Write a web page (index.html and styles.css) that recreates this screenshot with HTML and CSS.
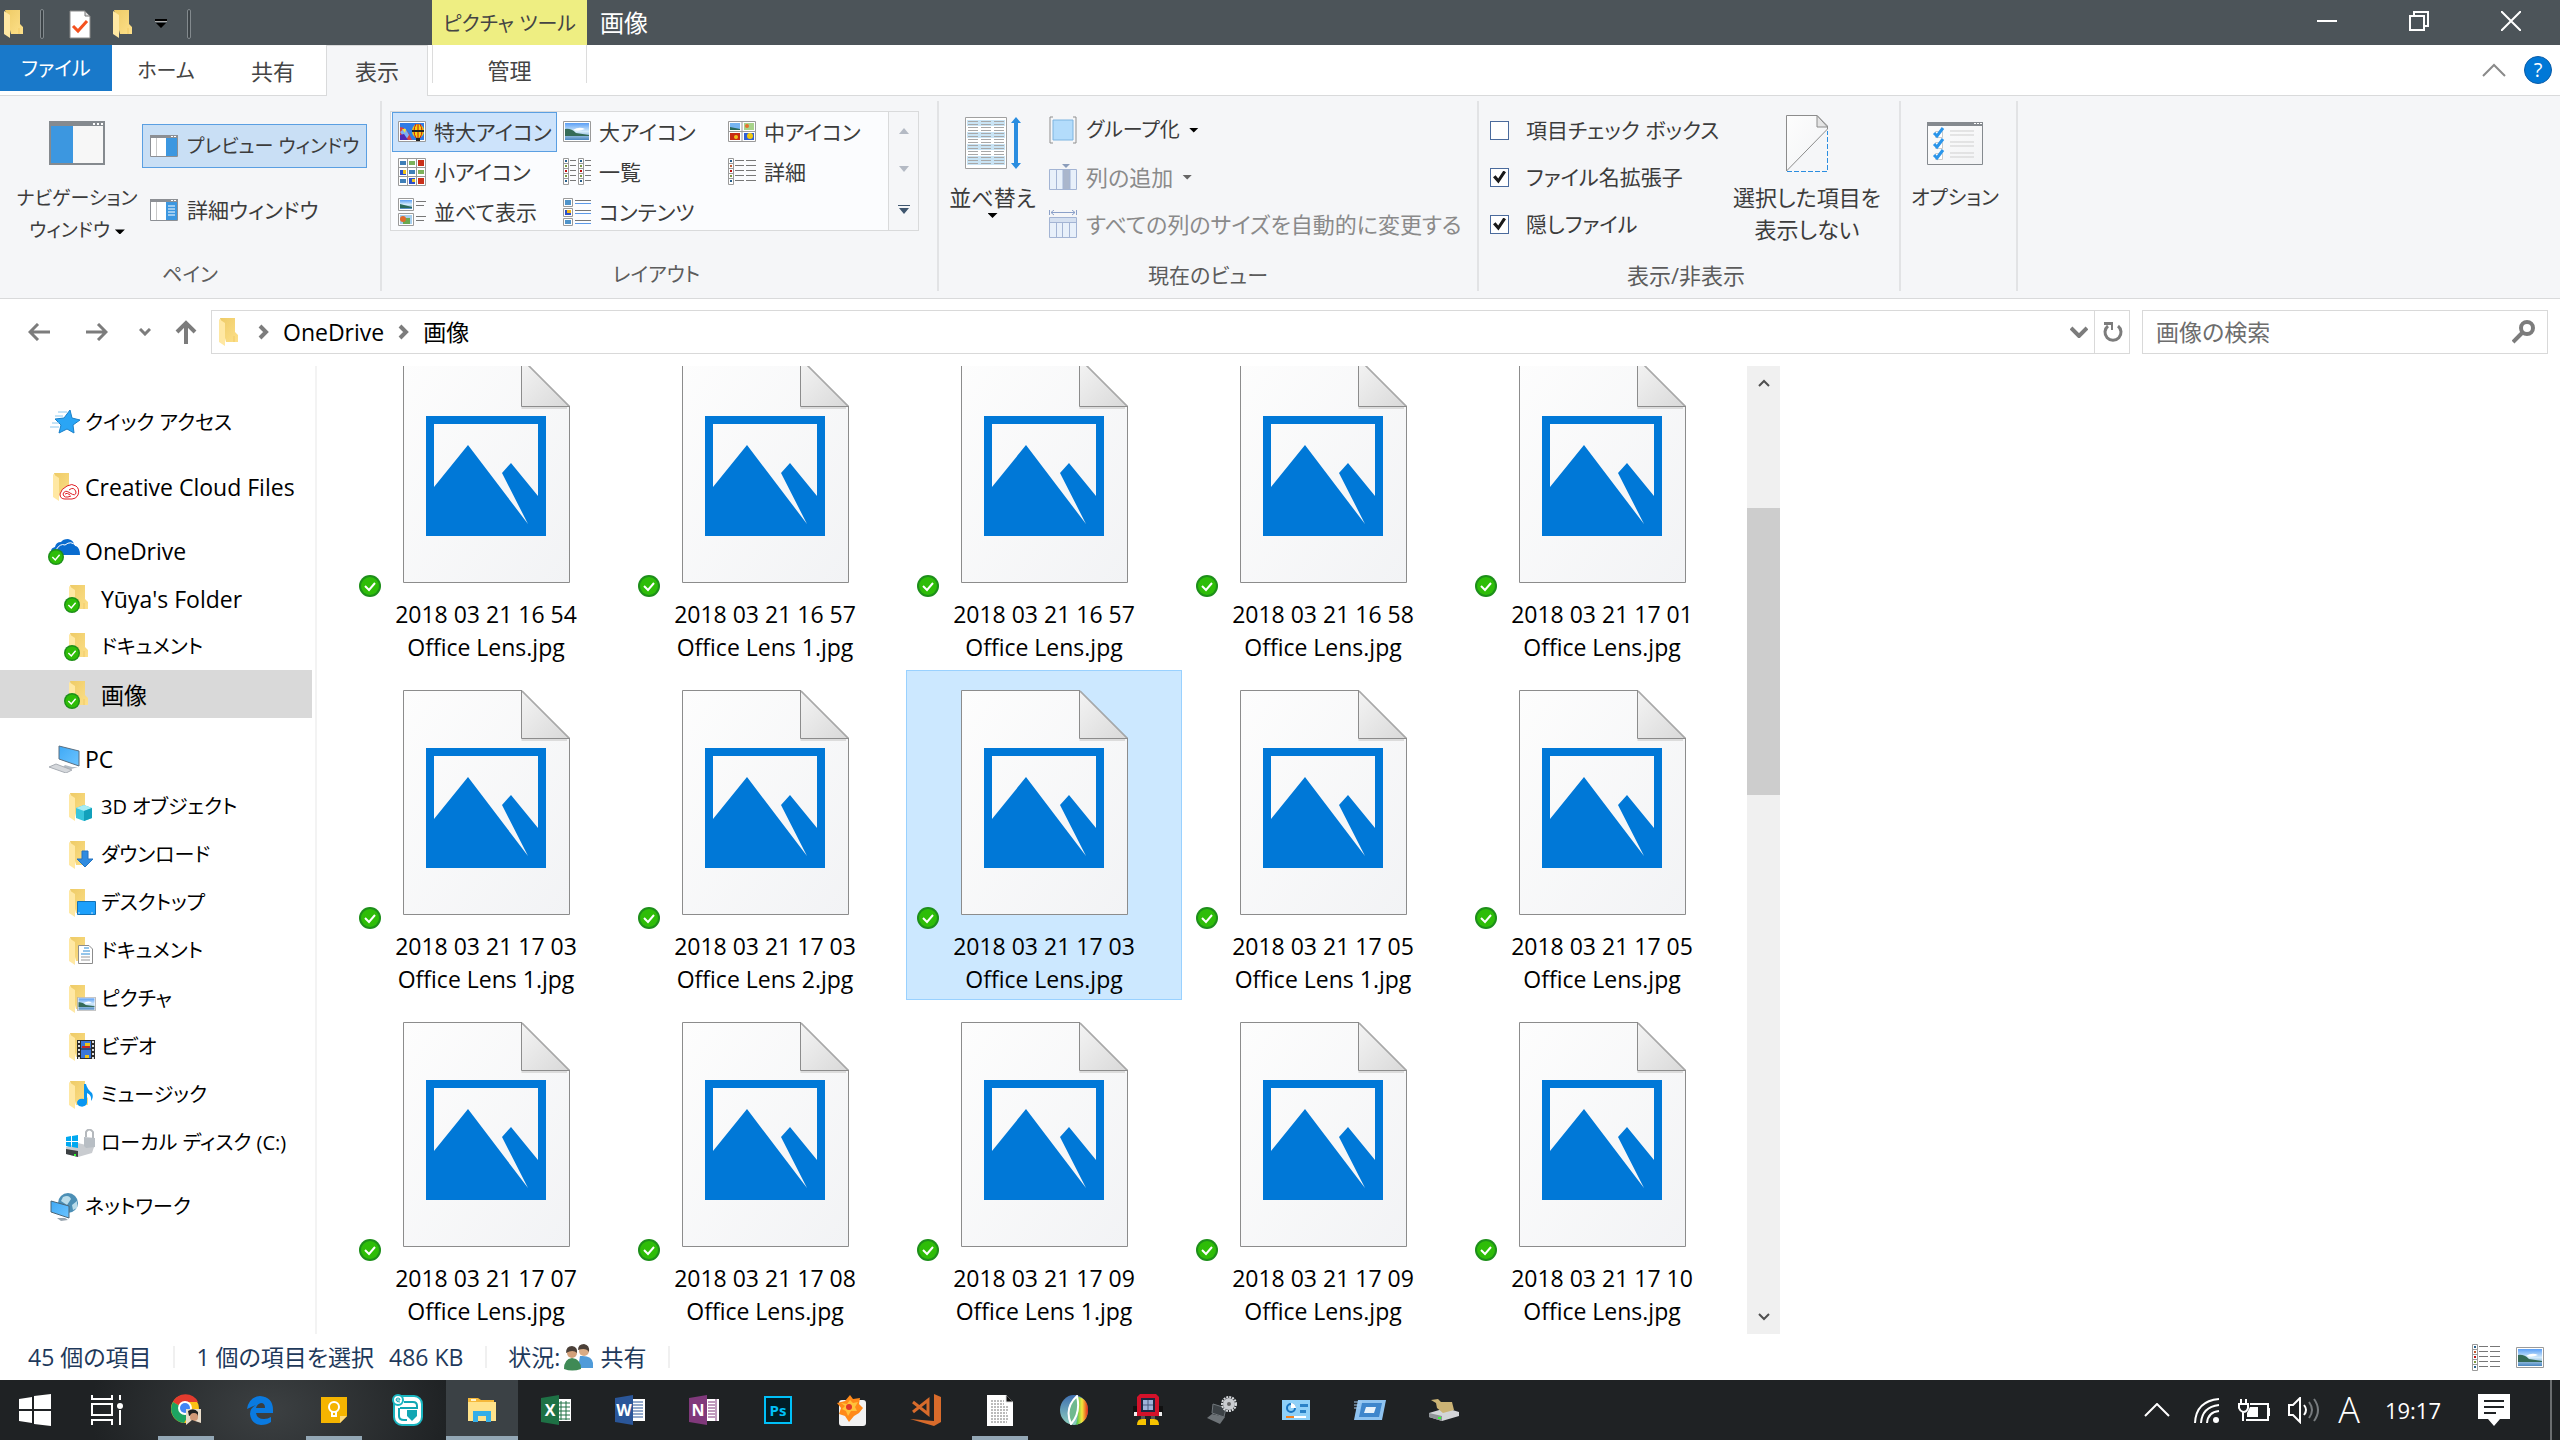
FILE: index.html
```html
<!DOCTYPE html>
<html lang="ja">
<head>
<meta charset="utf-8">
<title>画像</title>
<link rel="stylesheet" href="styles.css">
</head>
<body>
<svg class="defs" aria-hidden="true">
  <defs>
    <linearGradient id="gFolder" x1="0" y1="0" x2="1" y2="1"><stop offset="0" stop-color="#eecb66"/><stop offset="1" stop-color="#fde08a"/></linearGradient>
    <linearGradient id="gPaper" x1="0" y1="0" x2="1" y2="1"><stop offset="0" stop-color="#fdfdfd"/><stop offset="1" stop-color="#f2f3f5"/></linearGradient>
    <linearGradient id="gFold" x1="0" y1="0" x2="1" y2="1"><stop offset="0" stop-color="#f4f4f4"/><stop offset="1" stop-color="#d9d9d9"/></linearGradient>
    <linearGradient id="gSky" x1="0" y1="0" x2="0" y2="1"><stop offset="0" stop-color="#5a9ef5"/><stop offset=".5" stop-color="#d5ecfb"/><stop offset="1" stop-color="#4a86c0"/></linearGradient>
    <linearGradient id="gScreen" x1="0" y1="0" x2="1" y2="1"><stop offset="0" stop-color="#3fa9f5"/><stop offset="1" stop-color="#6cc4ff"/></linearGradient>
    <linearGradient id="gRainbow" x1="0" y1="0" x2="1" y2="0"><stop offset="0" stop-color="#3bbf52"/><stop offset=".5" stop-color="#f5e63b"/><stop offset="1" stop-color="#e2231a"/></linearGradient>
    <linearGradient id="gLeaf" x1="0" y1="0" x2="0" y2="1"><stop offset="0" stop-color="#3f6fb0"/><stop offset="1" stop-color="#8ed0c0"/></linearGradient>
    <symbol id="folder" viewBox="0 0 20 28">
      <path d="M1 0H16V14L19 17V24H7Z" fill="url(#gFolder)"/>
      <path d="M0 1L6 5V28L0 24Z" fill="#ffe8a3"/>
      <path d="M14 24V18H16V24Z" fill="#f3cd6b" opacity=".6"/>
    </symbol>
    <symbol id="ok" viewBox="0 0 22 22">
      <circle cx="11" cy="11" r="11" fill="#1d8f1a"/><circle cx="11" cy="11" r="9" fill="#2ebd08"/>
      <path d="M6 11L10 15L16 8" fill="none" stroke="#fff" stroke-width="2"/>
    </symbol>
    <symbol id="file" viewBox="0 0 167 225">
      <path d="M.5 .5H119L166.5 48V224.500H.5Z" fill="url(#gPaper)" stroke="#8c8c8c"/>
      <path d="M118.500 50H164" stroke="#dcdcdc" stroke-width="2"/>
      <path d="M118.500 1V48.500H166Z" fill="url(#gFold)" stroke="#8c8c8c"/>
      <path fill="#0078d7" fill-rule="evenodd" d="M23 58H143V178H23ZM31 66V129L65 87L125 166L99 115L108 105L135 138V66Z"/>
    </symbol>
    <symbol id="photo" viewBox="0 0 28 21">
      <path d="M.5 .5H27.500V20.500H.5Z" fill="#fff" stroke="#9a9a9a"/>
      <path d="M2 2H26V19H2Z" fill="url(#gSky)"/><path d="M10 9Q16 5 22 8Q16 11 10 9Z" fill="#fff"/>
      <path d="M2 8Q8 7 13 12L26 14V15H2Z" fill="#356b57"/>
    </symbol>
    <symbol id="balloon" viewBox="0 0 28 21">
      <path d="M.5 .5H27.500V20.500H.5Z" fill="#fff" stroke="#9a9a9a"/>
      <path d="M2 2H26V19H2Z" fill="#2f7be6"/>
      <path d="M2 6Q9 6 14 19H2Z" fill="#d8433f"/><path d="M2 11L7 7L11 14L8 19Z" fill="#7bb0f5"/><path d="M2 14L6 13L10 19H2Z" fill="#4e2bb5"/><path d="M4 8L8 8L7 12Z" fill="#f5e23b"/>
      <ellipse cx="20" cy="10" rx="6" ry="7" fill="#f4d312"/><path d="M18 3Q14 10 18 17M22 3Q26 10 22 17M20 3V17" stroke="#cc1111" fill="none"/><path d="M14 9H26V11H14Z" fill="#222"/><path d="M18 17H22V20H18Z" fill="#222"/>
    </symbol>
    <symbol id="grid4" viewBox="0 0 28 21">
      <path d="M.5 .5H27.500V20.500H.5Z" fill="#fff" stroke="#9a9a9a"/><path d="M14 0V21M0 10.500H28" stroke="#9a9a9a"/>
      <path d="M2 2H12V9H2Z" fill="#76b5f2"/><path d="M2 6L12 8V9H2Z" fill="#2b6a5b"/><path d="M16 2H26V9H16Z" fill="#a7d38b"/><circle cx="19" cy="5" r="2" fill="#e6702c"/><path d="M2 12H12V19H2Z" fill="#c72a14"/><circle cx="8" cy="16" r="2" fill="#f0c01c"/><path d="M16 12H26V19H16Z" fill="#2f5fd6"/><circle cx="22" cy="15" r="3" fill="#f2c80f"/>
    </symbol>
    <symbol id="grid9" viewBox="0 0 28 28">
      <path d="M.5 .5H27.500V27.500H.5Z" fill="#fff" stroke="#9a9a9a"/><path d="M9.500 0V28M18.500 0V28M0 9.500H28M0 18.500H28" stroke="#9a9a9a"/>
      <path d="M2 3H8V7H2ZM11 12H17V16H11ZM2 21H8V25H2Z" fill="#3f7fb8"/><path d="M11 3H17V7H11ZM20 12H26V16H20Z" fill="#7cb25a"/><path d="M20 2H26V8H20ZM20 20H26V26H20Z" fill="#c9301a"/><path d="M2 12H8V17H2ZM11 20H17V26H11Z" fill="#2b4fc9"/><path d="M5 12H8V16H5ZM14 21H17V24H14Z" fill="#f0c41a"/>
    </symbol>
    <symbol id="list" viewBox="0 0 28 27">
      <path d="M.5 .5H5.500V26.500H.5ZM15.500 .5H20.500V26.500H15.500Z" fill="#fff" stroke="#9a9a9a"/>
      <path d="M0 5.500H6M0 10.500H6M0 15.500H6M0 20.500H6M15 5.500H21M15 10.500H21M15 15.500H21M15 20.500H21" stroke="#9a9a9a"/>
      <path d="M7 2.500H13M7 7.500H13M7 12.500H13M7 17.500H13M7 22.500H13M22 2.500H28M22 7.500H28M22 12.500H28M22 17.500H28M22 22.500H28" stroke="#777"/>
      <path d="M2 2H4V4H2ZM2 22H4V24H2ZM17 2H19V4H17ZM17 22H19V24H17Z" fill="#27618c"/><path d="M2 12H4V14H2ZM17 12H19V14H17Z" fill="#c01010"/><path d="M2 17H4V19H2ZM17 17H19V19H17ZM2 7H4V9H2ZM17 7H19V9H17Z" fill="#7a9a40"/>
    </symbol>
    <symbol id="details" viewBox="0 0 28 27">
      <path d="M.5 .5H5.500V26.500H.5Z" fill="#fff" stroke="#9a9a9a"/><path d="M0 5.500H6M0 10.500H6M0 15.500H6M0 20.500H6" stroke="#9a9a9a"/>
      <path d="M7 2.500H16M7 7.500H16M7 12.500H16M7 17.500H16M7 22.500H16M18 2.500H28M18 7.500H28M18 12.500H28M18 17.500H28M18 22.500H28" stroke="#777"/>
      <path d="M2 2H4V4H2ZM2 22H4V24H2Z" fill="#27618c"/><path d="M2 12H4V14H2Z" fill="#c01010"/><path d="M2 17H4V19H2Z" fill="#7a9a40"/><path d="M2 7H4V9H2Z" fill="#c05a30"/>
    </symbol>
    <symbol id="tiles" viewBox="0 0 28 28">
      <path d="M.5 .5H15.500V12.500H.5ZM.5 15.500H15.500V27.500H.5Z" fill="#fff" stroke="#9a9a9a"/>
      <path d="M2 2H14V11H2Z" fill="url(#gSky)"/><path d="M2 6L14 9V10H2Z" fill="#2b6a5b"/><path d="M2 17H14V26H2Z" fill="#a7cfee"/><path d="M5 20H12V26H5Z" fill="#6aa84f"/><circle cx="5" cy="21" r="3" fill="#e06a2b"/>
      <path d="M18 3.500H28M18 7.500H26M18 18.500H28M18 22.500H26" stroke="#777"/>
    </symbol>
    <symbol id="content" viewBox="0 0 28 28">
      <path d="M.5 .5H9.500V8.500H.5ZM.5 10.500H9.500V18.500H.5ZM.5 20.500H9.500V27.500H.5Z" fill="#fff" stroke="#9a9a9a"/>
      <path d="M2 2H8V7H2ZM2 22H8V26H2Z" fill="#4f93c9"/><path d="M2 12H8V17H2Z" fill="#2b4fc9"/><path d="M4 12H8V15H4Z" fill="#f0b41a"/>
      <path d="M12 2.500H28M12 12.500H28M12 22.500H28" stroke="#777"/><path d="M12 5.500H28M12 15.500H28M12 25.500H28" stroke="#5c9ae8"/>
    </symbol>
    <symbol id="preview" viewBox="0 0 28 22">
      <path d="M.5 .5H27.500V21.500H.5Z" fill="#fff" stroke="#8c8f94"/><path d="M0 0H28V3H0Z" fill="#8c8f94"/><path d="M6.500 3V21" stroke="#c8c8c8"/><path d="M16 3H27V21H16Z" fill="#3c97e0"/><path d="M21 1H23V2H21ZM24 1H26V2H24Z" fill="#fff"/>
    </symbol>
    <symbol id="chev" viewBox="0 0 12 16"><path d="M2 2L8 8L2 14" fill="none" stroke="#7c7c7c" stroke-width="4"/></symbol>
  </defs>
</svg>

<div class="window">
  <header class="titlebar">
    <div class="qat">
      <svg width="20" height="28"><use href="#folder"/></svg>
      <span class="vbar"></span>
      <button class="bare" aria-label="プロパティ"><svg width="22" height="29" viewBox="0 0 22 29"><path d="M1 1H16L21 6V28H1Z" fill="#fff" stroke="#8a8a8a"/><path d="M16 1V6H21Z" fill="#ddd" stroke="#777"/><path d="M4 16L9 21L18 11" fill="none" stroke="#f4511e" stroke-width="3"/></svg></button>
      <button class="bare" aria-label="新しいフォルダー"><svg width="20" height="28"><use href="#folder"/></svg></button>
      <button class="bare more" aria-label="カスタマイズ"><svg width="12" height="10" viewBox="0 0 12 10"><path d="M0 0H12V2H0ZM1 4H11L6 9Z" fill="#000"/><path d="M0 2H12V3H0Z" fill="#aaa"/></svg></button>
      <span class="vbar"></span>
    </div>
    <div class="context kana">ピクチャ ツール</div>
    <h1 class="title">画像</h1>
    <div class="winctl">
      <button aria-label="最小化"><svg width="20" height="20" viewBox="0 0 20 20"><path d="M0 10H20" stroke="#fff" stroke-width="2"/></svg></button>
      <button aria-label="元に戻す"><svg width="20" height="20" viewBox="0 0 20 20"><path d="M1 5H15V19H1ZM5 5V1H19V15H15" fill="none" stroke="#fff" stroke-width="2"/></svg></button>
      <button aria-label="閉じる"><svg width="20" height="20" viewBox="0 0 20 20"><path d="M0 0L20 20M20 0L0 20" stroke="#fff" stroke-width="2"/></svg></button>
    </div>
  </header>

  <nav class="tabs">
    <button class="tab file kana">ファイル</button>
    <button class="tab home kana">ホーム</button>
    <button class="tab share">共有</button>
    <button class="tab view">表示</button>
    <button class="tab manage">管理</button>
    <span class="grow"></span>
    <button class="bare" aria-label="リボンの最小化"><svg width="24" height="14" viewBox="0 0 24 14"><path d="M1 13L12 2L23 13" fill="none" stroke="#8a8a8a" stroke-width="2"/></svg></button>
    <button class="help" aria-label="ヘルプ">?</button>
  </nav>

  <section class="ribbon">
    <div class="group g-pane">
      <div class="gbody">
        <button class="big navpane"><svg width="56" height="44" viewBox="0 0 56 44"><path d="M1 1H55V43H1Z" fill="#f7f7f7" stroke="#858a8f" stroke-width="2"/><path d="M0 0H56V5H0Z" fill="#858a8f"/><path d="M2 5H24V42H2Z" fill="#3c97e0"/><path d="M44 2H46V4H44ZM48 2H50V4H48ZM52 2H54V4H52Z" fill="#fff"/></svg><span>ナビゲーション<br>ウィンドウ <i class="tri"></i></span></button>
        <div class="stack">
          <button class="small dense on"><svg width="28" height="22"><use href="#preview"/></svg>プレビュー ウィンドウ</button>
          <button class="small mixed"><svg width="28" height="22" viewBox="0 0 28 22"><use href="#preview" width="28" height="22"/><path d="M18 7H25M18 10H25M18 13H25M18 16H25" stroke="#fff"/></svg>詳細ウィンドウ</button>
        </div>
      </div>
      <div class="glabel kana">ペイン</div>
    </div>

    <div class="group g-layout">
      <div class="gbody">
        <div class="gallery">
          <div class="opts">
            <button class="opt on"><svg width="28" height="21"><use href="#balloon"/></svg>特大アイコン</button>
            <button class="opt"><svg width="28" height="21"><use href="#photo"/></svg>大アイコン</button>
            <button class="opt"><svg width="28" height="21"><use href="#grid4"/></svg>中アイコン</button>
            <button class="opt"><svg width="28" height="28"><use href="#grid9"/></svg>小アイコン</button>
            <button class="opt"><svg width="28" height="27"><use href="#list"/></svg>一覧</button>
            <button class="opt"><svg width="28" height="27"><use href="#details"/></svg>詳細</button>
            <button class="opt"><svg width="28" height="28"><use href="#tiles"/></svg>並べて表示</button>
            <button class="opt"><svg width="28" height="28"><use href="#content"/></svg>コンテンツ</button>
          </div>
          <div class="spin">
            <button aria-label="上へ"><svg width="10" height="6" viewBox="0 0 10 6"><path d="M0 6L5 0L10 6Z" fill="#b4bac4"/></svg></button>
            <button aria-label="下へ"><svg width="10" height="6" viewBox="0 0 10 6"><path d="M0 0L5 6L10 0Z" fill="#b4bac4"/></svg></button>
            <button aria-label="その他"><svg width="12" height="9" viewBox="0 0 12 9"><path d="M0 0H12V1H0ZM1 3L6 9L11 3Z" fill="#3f566f"/></svg></button>
          </div>
        </div>
      </div>
      <div class="glabel kana">レイアウト</div>
    </div>

    <div class="group g-current">
      <div class="gbody">
        <button class="big sort"><svg width="56" height="52" viewBox="0 0 56 52"><path d="M.5 .5H41.500V51.500H.5Z" fill="#fff" stroke="#a0a0a0"/><path d="M2 3H40V9H2ZM2 15H40V21H2ZM2 27H40V33H2ZM2 39H40V48H2Z" fill="#c9e4f5"/><path d="M3 4.500H40M3 7.500H40M3 10.500H40M3 13.500H40M3 16.500H40M3 19.500H40M3 22.500H40M3 25.500H40M3 28.500H40M3 31.500H40M3 34.500H40M3 37.500H40M3 40.500H40M3 43.500H40M3 46.500H40" stroke="#a8a8a8" stroke-dasharray="10 3"/><path d="M51 0L56 6H53V46H56L51 52L46 46H49V6H46Z" fill="#2a8de0"/></svg><span>並べ替え</span><i class="tri"></i></button>
        <div class="stack three">
          <button class="small kana"><svg width="28" height="28" viewBox="0 0 28 28"><path d="M4 1H1V27H4M24 1H27V27H24" fill="none" stroke="#8f8f8f"/><path d="M4 4H24V24H4Z" fill="#b3dcfb" stroke="#7db4e0"/></svg>グループ化 <i class="tri"></i></button>
          <button class="small dim" disabled><svg width="28" height="26" viewBox="0 0 28 26"><path d="M13 0H21L17 4Z" fill="#8b9dbb"/><path d="M.5 5.500H27.500V25.500H.5Z" fill="#e8f0fa" stroke="#a3b4d4"/><path d="M14 6H21V25H14Z" fill="#aab6cc"/><path d="M7.500 6V25M14 6V25M21 6V25" stroke="#a3b4d4"/></svg>列の追加 <i class="tri"></i></button>
          <button class="small dim" disabled><svg width="28" height="28" viewBox="0 0 28 28"><path d="M.5 0V5M27.500 0V5M2 2.500H26M5 0L2 2.500L5 5M23 0L26 2.500L23 5" fill="none" stroke="#8ba0c8"/><path d="M.5 7.500H27.500V27.500H.5Z" fill="#e8f0fa" stroke="#a3b4d4"/><path d="M1 8H27V12H1Z" fill="#d5e0f0"/><path d="M0 12.500H28M7.500 12V28M13.500 12V28M20.500 12V28" stroke="#a3b4d4"/></svg>すべての列のサイズを自動的に変更する</button>
        </div>
      </div>
      <div class="glabel mixed">現在のビュー</div>
    </div>

    <div class="group g-show">
      <div class="gbody">
        <div class="checks">
          <label><input type="checkbox">項目チェック ボックス</label>
          <label><input type="checkbox" checked>ファイル名拡張子</label>
          <label><input type="checkbox" checked>隠しファイル</label>
        </div>
        <button class="big hide"><svg width="42" height="57" viewBox="0 0 42 57"><path d="M.5 .5H31L41.500 11V14L.5 56Z" fill="url(#gPaper)" stroke="#8c8c8c"/><path d="M31 .5V12H41.500Z" fill="#e4e4e4" stroke="#8c8c8c"/><path d="M1 56.500H41.500V16" fill="none" stroke="#2a8de0" stroke-dasharray="5 2"/></svg><span>選択した項目を<br>表示しない</span></button>
      </div>
      <div class="glabel">表示/非表示</div>
    </div>

    <div class="group g-option">
      <div class="gbody">
        <button class="big opt-btn kana"><svg width="56" height="43" viewBox="0 0 56 43"><path d="M.5 .5H55.500V42.500H.5Z" fill="url(#gPaper)" stroke="#858a8f"/><path d="M0 0H56V4H0Z" fill="#858a8f"/><path d="M47 1H49V2H47ZM50 1H52V2H50ZM53 1H55V2H53Z" fill="#fff"/><path d="M8.500 9.500H15.500V15.500H8.500ZM8.500 20.500H15.500V26.500H8.500ZM8.500 31.500H15.500V37.500H8.500Z" fill="#fff" stroke="#ccc"/><path d="M7 11L10 14L16 6M7 22L10 25L16 17M7 33L10 36L16 28" fill="none" stroke="#2a95ea" stroke-width="3"/><path d="M23 9H47M23 13H47M23 20H47M23 24H47M23 31H47M23 35H47" stroke="#cfcfcf"/></svg><span>オプション</span></button>
      </div>
    </div>
  </section>

  <div class="navrow">
    <button class="bare" aria-label="戻る"><svg width="22" height="18" viewBox="0 0 22 18"><path d="M22 9H3M10 1L2 9L10 17" fill="none" stroke="#7c7c7c" stroke-width="3"/></svg></button>
    <button class="bare fwd" aria-label="進む"><svg width="22" height="18" viewBox="0 0 22 18"><path d="M0 9H19M12 1L20 9L12 17" fill="none" stroke="#7c7c7c" stroke-width="3"/></svg></button>
    <button class="bare hist" aria-label="最近表示した場所"><svg width="12" height="8" viewBox="0 0 12 8"><path d="M1 1L6 6L11 1" fill="none" stroke="#7c7c7c" stroke-width="3"/></svg></button>
    <button class="bare up" aria-label="上へ"><svg width="22" height="24" viewBox="0 0 22 24"><path d="M11 24V3M2 12L11 3L20 12" fill="none" stroke="#7c7c7c" stroke-width="4"/></svg></button>
    <div class="address">
      <svg width="20" height="28"><use href="#folder"/></svg>
      <svg class="sep" width="12" height="16"><use href="#chev"/></svg>
      <a href="#">OneDrive</a>
      <svg class="sep" width="12" height="16"><use href="#chev"/></svg>
      <a href="#">画像</a>
      <span class="grow"></span>
      <button class="bare drop" aria-label="以前の場所"><svg width="18" height="12" viewBox="0 0 18 12"><path d="M1 2L9 10L17 2" fill="none" stroke="#7c7c7c" stroke-width="4"/></svg></button>
      <button class="bare reload" aria-label="更新"><svg width="20" height="22" viewBox="0 0 20 22"><path d="M15 5A8 8 0 1 1 5 5" fill="none" stroke="#7c7c7c" stroke-width="3"/><path d="M1 1H10V9H8V4H1Z" fill="#7c7c7c"/></svg></button>
    </div>
    <div class="search">
      <input type="search" aria-label="画像の検索" placeholder="画像の検索">
      <svg width="24" height="24" viewBox="0 0 24 24"><circle cx="15" cy="8" r="6" fill="none" stroke="#7c7c7c" stroke-width="4"/><path d="M11 12L1 22" stroke="#7c7c7c" stroke-width="4"/></svg>
    </div>
  </div>

  <main class="main">
    <nav class="tree">
      <a href="#" class="kana"><svg width="32" height="28" viewBox="0 0 32 28"><path d="M22 1L24 9L32 11L25 16L26 24L19 20L11 24L13 16L7 10L16 9Z" fill="#2aa5f5" stroke="#1b80c8"/><path d="M10 3H19M7 7H15M4 14H11M2 18H11" stroke="#8cc8ee"/></svg>クイック アクセス</a>
      <a href="#" class="gap"><svg width="32" height="28" viewBox="0 0 32 28"><use href="#folder" x="5" y="0" width="20" height="28"/><path d="M19 13Q24 10 28 13Q32 16 30 22Q28 26 24 26H17Q12 26 12 21Q13 16 19 13Z" fill="#fff" stroke="#e01f26" stroke-width="1"/><path d="M23 23Q16 26 15 21Q17 16 22 20Q28 24 28 19Q26 13 21 17M17 21Q19 19 22 22" fill="none" stroke="#e01f26" stroke-width="1"/></svg>Creative Cloud Files</a>
      <a href="#" class="gap"><svg width="32" height="28" viewBox="0 0 32 28"><path d="M6 18Q3 18 3 14Q3 11 7 10Q8 5 13 5Q15 2 20 2Q25 3 26 7L28 9Q32 11 32 18H12Z" fill="#0a6ccf"/><path d="M8 13Q12 6 17 8Q23 3 28 9" fill="none" stroke="#fff" stroke-width="1"/><use href="#ok" x="0" y="12" width="16" height="16"/></svg>OneDrive</a>
      <a href="#" class="sub"><svg width="32" height="28" viewBox="0 0 32 28"><use href="#folder" x="5" width="20" height="28"/><use href="#ok" x="0" y="12" width="16" height="16"/></svg>Yūya's Folder</a>
      <a href="#" class="sub kana"><svg width="32" height="28" viewBox="0 0 32 28"><use href="#folder" x="5" width="20" height="28"/><use href="#ok" x="0" y="12" width="16" height="16"/></svg>ドキュメント</a>
      <a href="#" class="sub current"><svg width="32" height="28" viewBox="0 0 32 28"><use href="#folder" x="5" width="20" height="28"/><use href="#ok" x="0" y="12" width="16" height="16"/></svg>画像</a>
      <a href="#" class="gap"><svg width="32" height="28" viewBox="0 0 32 28"><path d="M11 1L31 6V21L11 14Z" fill="url(#gScreen)" stroke="#5a6e80"/><path d="M17 20L24 22L30 22L20 25L15 22Z" fill="#b4bcc4"/><path d="M1 22L8 19L24 25L18 28Z" fill="#d5d8dc" stroke="#a8adb4"/></svg>PC</a>
      <a href="#" class="sub kana"><svg width="32" height="28" viewBox="0 0 32 28"><use href="#folder" x="5" width="20" height="28"/><path d="M12 15L20 12L28 15V25L20 28L12 25Z" fill="#38c5dc"/><path d="M12 15L20 18L28 15L20 12Z" fill="#a8ecf5"/><path d="M20 18L28 15V25L20 28Z" fill="#12a0bb"/></svg>3D オブジェクト</a>
      <a href="#" class="sub kana"><svg width="32" height="28" viewBox="0 0 32 28"><use href="#folder" x="5" width="20" height="28"/><path d="M18 10H24V18H29L21 26L13 18H18Z" fill="#2f8be0" stroke="#2473c0"/></svg>ダウンロード</a>
      <a href="#" class="sub kana"><svg width="32" height="28" viewBox="0 0 32 28"><use href="#folder" x="5" width="20" height="28"/><path d="M13.500 12.500H31.500V25.500H13.500Z" fill="#1da0fb" stroke="#1272b8"/><path d="M14 24H31" stroke="#cde" stroke-dasharray="2 11"/></svg>デスクトップ</a>
      <a href="#" class="sub kana"><svg width="32" height="28" viewBox="0 0 32 28"><use href="#folder" x="5" width="20" height="28"/><path d="M14.500 8.500H25L28.500 12V26.500H14.500Z" fill="#fff" stroke="#8c8c8c"/><path d="M20 11H25M19 14H26M17 17H26" stroke="#2b8bd4"/><path d="M17 20H26M17 23H26" stroke="#999"/></svg>ドキュメント</a>
      <a href="#" class="sub kana"><svg width="32" height="28" viewBox="0 0 32 28"><use href="#folder" x="5" width="20" height="28"/><use href="#photo" x="13" y="12" width="19" height="14"/></svg>ピクチャ</a>
      <a href="#" class="sub kana"><svg width="32" height="28" viewBox="0 0 32 28"><use href="#folder" x="5" width="20" height="28"/><path d="M13 7H31V26H13Z" fill="#2a2a2a"/><path d="M17 8H27V25H17Z" fill="#3a76d8"/><path d="M15 8V26M29 8V26" stroke="#ddd" stroke-width="2" stroke-dasharray="2 2"/><path d="M18 13H26V15H18Z" fill="#c62828"/><path d="M21 10H26V13H21ZM21 22H25V25H21Z" fill="#f0c41a"/><path d="M17 16H27" stroke="#222"/></svg>ビデオ</a>
      <a href="#" class="sub kana"><svg width="32" height="28" viewBox="0 0 32 28"><use href="#folder" x="5" width="20" height="28"/><path d="M20 3H22Q23 8 28 12Q30 16 27 20Q28 14 23 12V22A5 4 0 1 1 20 18Z" fill="#0a96f0"/></svg>ミュージック</a>
      <a href="#" class="sub kana"><svg width="32" height="28" viewBox="0 0 32 28"><path d="M2 18L14 14L30 18L28 24L14 28L2 25Z" fill="#c9ccd0"/><path d="M2 20L14 22V28L2 25Z" fill="#3c4043"/><path d="M2 8L7 7V12H2ZM8 7L14 6V12H8ZM2 13H7V18L2 17ZM8 13H14V19L8 18Z" fill="#00a8f0"/><path d="M10 25H12V27H10Z" fill="#3f3"/><path d="M22 8V3Q25 -2 29 3V9" fill="none" stroke="#b4b8bc" stroke-width="2"/><path d="M20 8L31 9V18L22 19L20 17Z" fill="#b8bec4"/></svg>ローカル ディスク (C:)</a>
      <a href="#" class="gap kana"><svg width="32" height="28" viewBox="0 0 32 28"><circle cx="20" cy="10" r="10" fill="#4c8fb5"/><path d="M15 4Q21 1 23 6L19 12L13 8ZM24 12L29 8V15L25 17Z" fill="#b9dcea"/><path d="M3 8L21 13V25L3 19Z" fill="url(#gScreen)" stroke="#4a6678"/><path d="M9 25L17 25L20 27L13 28Z" fill="#9aa6b0"/></svg>ネットワーク</a>
    </nav>

    <section class="files">
      <div class="grid">
        <button class="item"><svg class="page" width="167" height="225"><use href="#file"/></svg><svg class="badge" width="22" height="22"><use href="#ok"/></svg><span>2018 03 21 16 54<br>Office Lens.jpg</span></button>
        <button class="item"><svg class="page" width="167" height="225"><use href="#file"/></svg><svg class="badge" width="22" height="22"><use href="#ok"/></svg><span>2018 03 21 16 57<br>Office Lens 1.jpg</span></button>
        <button class="item"><svg class="page" width="167" height="225"><use href="#file"/></svg><svg class="badge" width="22" height="22"><use href="#ok"/></svg><span>2018 03 21 16 57<br>Office Lens.jpg</span></button>
        <button class="item"><svg class="page" width="167" height="225"><use href="#file"/></svg><svg class="badge" width="22" height="22"><use href="#ok"/></svg><span>2018 03 21 16 58<br>Office Lens.jpg</span></button>
        <button class="item"><svg class="page" width="167" height="225"><use href="#file"/></svg><svg class="badge" width="22" height="22"><use href="#ok"/></svg><span>2018 03 21 17 01<br>Office Lens.jpg</span></button>
        <button class="item"><svg class="page" width="167" height="225"><use href="#file"/></svg><svg class="badge" width="22" height="22"><use href="#ok"/></svg><span>2018 03 21 17 03<br>Office Lens 1.jpg</span></button>
        <button class="item"><svg class="page" width="167" height="225"><use href="#file"/></svg><svg class="badge" width="22" height="22"><use href="#ok"/></svg><span>2018 03 21 17 03<br>Office Lens 2.jpg</span></button>
        <button class="item selected"><svg class="page" width="167" height="225"><use href="#file"/></svg><svg class="badge" width="22" height="22"><use href="#ok"/></svg><span>2018 03 21 17 03<br>Office Lens.jpg</span></button>
        <button class="item"><svg class="page" width="167" height="225"><use href="#file"/></svg><svg class="badge" width="22" height="22"><use href="#ok"/></svg><span>2018 03 21 17 05<br>Office Lens 1.jpg</span></button>
        <button class="item"><svg class="page" width="167" height="225"><use href="#file"/></svg><svg class="badge" width="22" height="22"><use href="#ok"/></svg><span>2018 03 21 17 05<br>Office Lens.jpg</span></button>
        <button class="item"><svg class="page" width="167" height="225"><use href="#file"/></svg><svg class="badge" width="22" height="22"><use href="#ok"/></svg><span>2018 03 21 17 07<br>Office Lens.jpg</span></button>
        <button class="item"><svg class="page" width="167" height="225"><use href="#file"/></svg><svg class="badge" width="22" height="22"><use href="#ok"/></svg><span>2018 03 21 17 08<br>Office Lens.jpg</span></button>
        <button class="item"><svg class="page" width="167" height="225"><use href="#file"/></svg><svg class="badge" width="22" height="22"><use href="#ok"/></svg><span>2018 03 21 17 09<br>Office Lens 1.jpg</span></button>
        <button class="item"><svg class="page" width="167" height="225"><use href="#file"/></svg><svg class="badge" width="22" height="22"><use href="#ok"/></svg><span>2018 03 21 17 09<br>Office Lens.jpg</span></button>
        <button class="item"><svg class="page" width="167" height="225"><use href="#file"/></svg><svg class="badge" width="22" height="22"><use href="#ok"/></svg><span>2018 03 21 17 10<br>Office Lens.jpg</span></button>
      </div>
    </section>
    <div class="scrollbar">
      <button aria-label="上にスクロール"><svg width="12" height="8" viewBox="0 0 12 8"><path d="M1 7L6 2L11 7" fill="none" stroke="#505050" stroke-width="2"/></svg></button>
      <div class="track"><div class="thumb"></div></div>
      <button aria-label="下にスクロール"><svg width="12" height="8" viewBox="0 0 12 8"><path d="M1 1L6 6L11 1" fill="none" stroke="#505050" stroke-width="2"/></svg></button>
    </div>
    <aside class="previewpane"></aside>
  </main>

  <footer class="status">
    <span class="cell count">45 個の項目</span>
    <span class="cell picked">1 個の項目を選択<span>486 KB</span></span>
    <span class="cell state">状況: <svg width="30" height="27" viewBox="0 0 30 27"><path d="M16 12Q28 11 29 19V24H14Z" fill="#4f9bd9"/><circle cx="20" cy="7" r="5" fill="#d8ab84"/><path d="M14 6Q14 0 20 0Q26 1 25 8Q22 3 14 6Z" fill="#4b4038"/><path d="M0 25Q0 15 8 14Q17 15 17 25Q8 28 0 25Z" fill="#3f8a55"/><circle cx="8" cy="9" r="5" fill="#d3a079"/><path d="M2 9Q2 2 8 2Q14 3 13 9Q9 5 2 9Z" fill="#4b4038"/></svg> 共有</span>
    <span class="grow"></span>
    <button class="bare" aria-label="詳細表示"><svg width="28" height="27"><use href="#details"/></svg></button>
    <button class="bare" aria-label="大きい縮小版"><svg width="28" height="21"><use href="#photo"/></svg></button>
  </footer>
</div>

<footer class="taskbar">
  <div class="system">
    <button class="tb" aria-label="スタート"><svg width="32" height="32" viewBox="0 0 32 32"><path d="M0 5L13 3V15H0ZM15 2L32 0V15H15ZM0 17H13V29L0 27ZM15 17H32V32L15 30Z" fill="#fff"/></svg></button>
    <button class="tb" aria-label="タスク ビュー"><svg width="32" height="30" viewBox="0 0 32 30"><path d="M1 0V4H21V0M1 30V25H21V30M1 9H21V20H1ZM29 0V5M29 15V30" fill="none" stroke="#fff" stroke-width="2"/><circle cx="29" cy="11" r="3" fill="#fff"/></svg></button>
  </div>
  <button class="tb run" aria-label="Chrome"><svg width="32" height="32" viewBox="0 0 32 32"><circle cx="15" cy="15" r="14" fill="#fbc116"/><path d="M15 15L3 8A14 14 0 0 1 28 8H15Z" fill="#e33b2e"/><path d="M15 15L3 8A14 14 0 0 0 14 29L20 19Z" fill="#1da462"/><circle cx="15" cy="14" r="7" fill="#fff"/><circle cx="15" cy="14" r="5" fill="#4285f4"/><path d="M16 15H31V31H16Z" fill="#e9dcc9"/><path d="M18 17Q24 13 28 18V23L24 20L19 22Z" fill="#222"/><circle cx="24" cy="23" r="4" fill="#d39a77"/><path d="M16 31L22 26L31 29V31Z" fill="#333"/></svg></button>
  <button class="tb" aria-label="Edge"><svg width="28" height="29" viewBox="0 0 28 29"><path d="M1 13Q3 1 14 0Q27 1 27 14V17H10Q11 23 18 23Q22 23 25 21V26Q21 29 15 29Q5 28 4 18Q4 12 10 9Q7 10 1 13ZM10 12H19Q19 7 15 7Q11 8 10 12Z" fill="#0a7ae0"/></svg></button>
  <button class="tb run" aria-label="Keep"><svg width="26" height="26" viewBox="0 0 26 26"><path d="M0 0H26V19L19 26H0Z" fill="#f5b400"/><path d="M19 26V19H26Z" fill="#fdd97a"/><circle cx="13" cy="10" r="5" fill="none" stroke="#fff" stroke-width="2"/><path d="M11 15V19H15V15" fill="none" stroke="#fff" stroke-width="2"/></svg></button>
  <button class="tb" aria-label="セキュリティ"><svg width="32" height="32" viewBox="0 0 32 32"><rect x="2" y="2" width="28" height="29" rx="8" fill="#fff" stroke="#19b5c0" stroke-width="2"/><path d="M7 14V22Q7 26 12 26H15M12 8H21Q25 8 25 12V15M8 14H24" fill="none" stroke="#12a6b3" stroke-width="2"/><path d="M15 16H25V22L20 27L15 22Z" fill="#12a6b3"/><circle cx="6" cy="6" r="5" fill="#fff" stroke="#19b5c0" stroke-width="2"/><path d="M4 6H8Q8 4 6 4Q4 4 4 6Q4 8 8 8" fill="none" stroke="#12a6b3"/></svg></button>
  <button class="tb run active" aria-label="エクスプローラー"><svg width="28" height="24" viewBox="0 0 28 24"><path d="M0 0H10L13 2H26V7H0Z" fill="#f5b83a"/><path d="M0 4H28V23H0Z" fill="#ffe28a"/><path d="M3 1H8V3H3Z" fill="#fff3c8"/><path d="M5 24V13H23V24H18V18H10V24Z" fill="#35aee8"/></svg></button>
  <button class="tb" aria-label="Excel"><svg width="30" height="30" viewBox="0 0 30 30"><path d="M15 4H30V26H15Z" fill="#fff"/><path d="M20 6V25M25 6V25M17 8H29M17 12H29M17 16H29M17 20H29M17 24H29" stroke="#1e7145" stroke-width="1"/><path d="M0 3L18 0V30L0 27Z" fill="#1e7145"/><text x="9" y="21" class="logo">X</text></svg></button>
  <button class="tb" aria-label="Word"><svg width="30" height="30" viewBox="0 0 30 30"><path d="M15 4H30V26H15Z" fill="#fff"/><path d="M17 7H28M17 10H28M17 13H28M17 16H28M17 19H28M17 22H28" stroke="#2a5699"/><path d="M0 3L18 0V30L0 27Z" fill="#2a5699"/><text x="9" y="21" class="logo">W</text></svg></button>
  <button class="tb" aria-label="OneNote"><svg width="30" height="30" viewBox="0 0 30 30"><path d="M15 4H30V26H15Z" fill="#fff"/><path d="M19 7H26M19 10H26M19 13H26M19 16H26M19 19H26M19 22H26M27 4V26" stroke="#80397b"/><path d="M0 3L18 0V30L0 27Z" fill="#80397b"/><text x="9" y="21" class="logo">N</text></svg></button>
  <button class="tb" aria-label="Photoshop"><svg width="28" height="28" viewBox="0 0 28 28"><path d="M1 1H27V27H1Z" fill="#001d26" stroke="#00c0f8" stroke-width="2"/><text x="14" y="20" class="logo ps">Ps</text></svg></button>
  <button class="tb" aria-label="フォト"><svg width="30" height="31" viewBox="0 0 30 31"><rect x="2" y="5" width="27" height="26" rx="3" fill="#f2f2f2"/><path d="M13 0L16 4L23 3L22 9L26 13L22 18L17 21L12 27L8 21L2 19L4 13L0 8L8 6Z" fill="#ff8a1a"/><path d="M13 5L16 8L21 7L18 12L20 16L14 16L11 21L9 16L5 14L8 11L4 8L10 9Z" fill="#ffc23a"/><circle cx="12" cy="12" r="3" fill="#e0342a"/></svg></button>
  <button class="tb" aria-label="Visual Studio"><svg width="32" height="32" viewBox="0 0 32 32"><path d="M24 0L31 3V28L24 32L0 25L24 27Z" fill="#d86b2b"/><path d="M3 8L18 20V6L3 18" fill="none" stroke="#d86b2b" stroke-width="3"/></svg></button>
  <button class="tb run" aria-label="メモ帳"><svg width="26" height="31" viewBox="0 0 26 31"><path d="M0 0H19L26 7V31H0Z" fill="#fff"/><path d="M19 0V7H26" fill="#111" stroke="#ddd"/><path d="M4 6H17M4 9H17M4 12H22M4 15H22M4 18H20M4 21H22M4 24H22M4 27H20" stroke="#777" stroke-dasharray="2 1"/></svg></button>
  <button class="tb" aria-label="ペイント"><svg width="28" height="30" viewBox="0 0 28 30"><ellipse cx="14" cy="15" rx="14" ry="15" fill="url(#gLeaf)"/><path d="M16 1Q28 3 28 15Q28 27 16 30Q20 16 16 1Z" fill="url(#gRainbow)"/><path d="M17 1Q4 13 11 29Q21 18 17 1Z" fill="#6fb98f" stroke="#fff" stroke-width="2"/></svg></button>
  <button class="tb" aria-label="ロボット"><svg width="30" height="32" viewBox="0 0 30 32"><path d="M4 3L7 0H23L26 3V22H4Z" fill="#d3122a"/><path d="M8 4H22V18H8Z" fill="#1c2740"/><path d="M10 6H20V16H10Z" fill="#9fb4da"/><path d="M15 6V16M10 11H20" stroke="#4a5c80"/><path d="M0 12H4V19H0ZM26 12H30V19H26Z" fill="#111"/><path d="M1 18H4V22H1ZM26 18H29V22H26Z" fill="#eee"/><path d="M8 22H12V25H8ZM18 22H22V25H18Z" fill="#555"/><path d="M4 31Q4 25 9 25H13V31ZM26 31Q26 25 21 25H17V31Z" fill="#f7c400"/></svg></button>
  <button class="tb" aria-label="デバイス"><svg width="30" height="28" viewBox="0 0 30 28"><path d="M6 8L19 12L17 21L5 17Z" fill="#3c4246" stroke="#70777c"/><path d="M0 22L5 18L18 21L13 28Z" fill="#6d7377"/><circle cx="22" cy="8" r="7" fill="none" stroke="#d7dadd" stroke-width="2" stroke-dasharray="2 1"/><circle cx="22" cy="8" r="6" fill="#c9ccd0"/><circle cx="22" cy="8" r="2" fill="#666"/></svg></button>
  <button class="tb" aria-label="コントロール パネル"><svg width="28" height="20" viewBox="0 0 28 20"><path d="M0 0H28V20H0Z" fill="#8fd0f8"/><circle cx="9" cy="8" r="4" fill="none" stroke="#1673c0" stroke-width="2"/><path d="M9 8V3A5 5 0 0 1 14 8Z" fill="#fff"/><path d="M18 4H26V7H18ZM18 10H24V13H18Z" fill="#2a82c8"/><path d="M4 17H24" stroke="#fff" stroke-width="2"/><path d="M4 17H12" stroke="#f58220" stroke-width="2"/></svg></button>
  <button class="tb" aria-label="ファイル名を指定して実行"><svg width="32" height="20" viewBox="0 0 32 20"><path d="M4 0H32L28 20H0Z" fill="#8fc3f0"/><path d="M8 3H28L25 17H5Z" fill="#3f86cc"/><path d="M12 7H22L20 13H10Z" fill="#e8f2fb"/><path d="M0 2H8M0 5H6M0 8H6" stroke="#a8cdf0"/></svg></button>
  <button class="tb" aria-label="ドライブ"><svg width="30" height="22" viewBox="0 0 30 22"><path d="M0 14L17 9L30 13V17L13 22L0 18Z" fill="#d3d5d8"/><path d="M0 14L13 17V22L0 18Z" fill="#8f9397"/><path d="M2 1L9 0L12 3L23 3L25 11L14 14L8 9L7 4Z" fill="#cbb375"/><path d="M9 18H12V20H9Z" fill="#3f3"/></svg></button>
  <span class="grow"></span>
  <div class="tray">
    <button class="bare" aria-label="隠れているインジケーター"><svg width="26" height="14" viewBox="0 0 26 14"><path d="M1 13L13 1L25 13" fill="none" stroke="#fff" stroke-width="2"/></svg></button>
    <button class="bare" aria-label="ネットワーク"><svg width="26" height="25" viewBox="0 0 26 25"><g fill="none" stroke="#fff" stroke-width="2"><path d="M1 25Q2 3 25 1"/><path d="M7 25Q8 9 25 7"/><path d="M13 25Q14 14 25 13"/></g><circle cx="22" cy="22" r="3" fill="#fff"/></svg></button>
    <button class="bare" aria-label="バッテリー"><svg width="32" height="23" viewBox="0 0 32 23"><path d="M12 5H30V21H8M30 10H32V16H30" fill="none" stroke="#fff" stroke-width="2"/><path d="M12 8H20V18H9V14Z" fill="#fff"/><path d="M3 0V5M8 0V5M1 5H10V9Q9 13 5 13Q2 12 1 9ZM5 13V22" fill="none" stroke="#fff" stroke-width="2"/></svg></button>
    <button class="bare" aria-label="音量"><svg width="32" height="27" viewBox="0 0 32 27"><path d="M1 8H5L12 1V25L5 18H1Z" fill="none" stroke="#fff" stroke-width="2"/><path d="M16 8Q20 13 16 18" fill="none" stroke="#fff" stroke-width="2"/><path d="M21 5Q27 13 21 21M26 2Q34 13 26 24" fill="none" stroke="#777b7e" stroke-width="2"/></svg></button>
    <button class="bare ime" aria-label="入力モード">A</button>
    <time class="clock">19:17</time>
    <button class="bare" aria-label="アクション センター"><svg width="32" height="32" viewBox="0 0 32 32"><path d="M0 0H32V25H22L16 32L10 25H0Z" fill="#fff"/><path d="M6 7H26M6 13H26M6 19H18" stroke="#1f2224" stroke-width="2"/></svg></button>
    <span class="desk"></span>
  </div>
</footer>
</body>
</html>
```

FILE: styles.css
```css
* { box-sizing: border-box; }
body {
  margin: 0;
  min-height: 100vh;
  display: flex;
  flex-direction: column;
  background: #fff;
  color: #000;
  font-family: "Open Sans", "Noto Sans CJK JP", sans-serif;
  font-size: 22px;
  line-height: 32px;
  font-feature-settings: "palt";
}
button, input {
  font: inherit;
  font-feature-settings: inherit;
  color: inherit;
  border: 0;
  padding: 0;
  background: none;
}
a { color: inherit; text-decoration: none; }
svg { display: block; flex: none; }
.defs { position: absolute; width: 0; height: 0; }
.grow { flex: 1; }
.bare { display: flex; align-items: center; justify-content: center; }
.dense { font-size: 19px; }
.kana { font-size: 20px; }
.mixed { font-size: 21px; }
.window { flex: 1; display: flex; flex-direction: column; min-height: 0; }

/* title bar */
.titlebar { height: 45px; background: #4c5459; color: #fff; display: flex; }
.qat { width: 432px; display: flex; align-items: center; padding: 3px 0 0 4px; }
.vbar { width: 4px; height: 30px; border: 1px solid #838a8e; border-radius: 2px; background: #3c4347; margin: 0 25px 0 16px; }
.qat .bare + .bare { margin-left: 22px; }
.qat .more + .vbar { margin-left: 20px; }
.context { width: 155px; background: #eeee82; color: #444; text-align: center; line-height: 47px; }
.title { margin: 0; padding-left: 13px; font-size: 24px; font-weight: 400; line-height: 46px; flex: 1; }
.winctl { display: flex; padding-right: 3px; }
.winctl button { width: 92px; display: flex; justify-content: center; padding-top: 11px; }

/* ribbon tabs */
.tabs { height: 51px; display: flex; align-items: center; border-bottom: 1px solid #d9dadb; color: #444; padding-right: 8px; }
.tab { height: 51px; align-self: flex-start; }
.file { width: 112px; height: 46px; padding-top: 2px; background: #1979ca; color: #fff; }
.home { width: 108px; }
.share { width: 106px; }
.view { width: 102px; background: #f5f6f8; border: 1px solid #d9dadb; border-bottom: 0; }
.manage { width: 155px; height: 38px; margin-left: 4px; padding-top: 9px; border: solid #dcdcdc; border-width: 0 1px; }
.help { width: 28px; height: 28px; margin-left: 18px; border-radius: 50%; border: 1px solid #0a5ca8; background: #0078d7; color: #fff; font-size: 20px; line-height: 26px; }

/* ribbon */
.ribbon { height: 203px; background: #f5f6f8; border-bottom: 1px solid #d9dadb; display: flex; padding: 5px 0 7px; color: #3c3c3c; }
.group { border-right: 2px solid #e2e3e5; display: flex; flex-direction: column; }
.gbody { flex: 1; display: flex; }
.glabel { text-align: center; color: #5c5c5c; height: 32px; }
.g-pane { width: 382px; }
.g-layout { width: 557px; }
.g-layout .glabel { padding-right: 6px; }
.g-current { width: 540px; }
.g-show { width: 422px; }
.g-show .glabel { padding-right: 6px; }
.g-option { width: 117px; }
.big { display: flex; flex-direction: column; align-items: center; justify-content: flex-start; padding-top: 20px; }
.big span { margin-top: 16px; }
.navpane { width: 142px; padding-left: 12px; font-size: 19px; }
.navpane span { margin-top: 17px; }
.tri { display: inline-block; width: 10px; height: 5px; background: #000; clip-path: polygon(0 0, 100% 0, 50% 100%); vertical-align: middle; }
.stack { display: flex; flex-direction: column; gap: 20px; padding-top: 23px; }
.small { display: flex; align-items: center; gap: 9px; height: 44px; padding: 0 7px; border: 1px solid transparent; white-space: nowrap; }
.small.on { background: #c9dff5; border-color: #5a9fe2; }
.gallery { height: 120px; width: 529px; margin: 10px 0 0 8px; border: 1px solid #d9dadb; background: #fbfcfe; display: flex; }
.opts { flex: 1; display: grid; grid-template-columns: repeat(3, 165px); grid-template-rows: repeat(3, 40px); padding-left: 1px; }
.opt { display: flex; align-items: center; gap: 8px; padding: 0 0 1px 5px; border: 1px solid transparent; white-space: nowrap; font-size: 21px; }
.opt.on { background: #cde3fb; border-color: #5a9fe2; }
.spin { width: 30px; border-left: 1px solid #d9dadb; background: #f5f6f8; display: grid; }
.spin button { display: flex; align-items: center; justify-content: center; }
.sort { width: 102px; padding: 16px 0 0 5px; }
.sort span { margin-top: 12px; }
.three { gap: 3px; padding-top: 7px; }
.dim { color: #8a8a8a; }
.dim .tri { background: #666; }
.checks { width: 250px; padding: 13px 0 0 11px; display: flex; flex-direction: column; gap: 15px; }
.checks label { display: flex; align-items: center; white-space: nowrap; font-size: 21px; }
.checks input { appearance: none; width: 19px; height: 19px; margin: 0 17px 0 0; border: 1px solid #4a6a9c; background: #fff; display: grid; place-items: center; }
.checks input:checked::after { content: ""; width: 13px; height: 13px; background: #1a1a1a; clip-path: polygon(0 52%, 20% 36%, 40% 62%, 80% 0, 100% 14%, 42% 100%); }
.hide { width: 156px; padding-top: 14px; }
.hide span { margin-top: 9px; }
.opt-btn { width: 108px; padding-top: 21px; }
.opt-btn span { margin-top: 17px; }

/* navigation row */
.navrow { height: 67px; display: flex; align-items: flex-start; padding: 11px 12px 0 28px; font-size: 23px; }
.navrow > .bare { height: 44px; }
.fwd { margin-left: 36px; }
.hist { margin-left: 31px; }
.up { margin: 0 14px 0 24px; }
.address { flex: 1; height: 44px; border: 1px solid #d9d9d9; display: flex; align-items: center; padding-left: 7px; }
.address .sep { margin: 0 13px 0 19px; }
.address a + .sep { margin-left: 14px; }
.drop { width: 30px; height: 42px; }
.reload { width: 35px; height: 42px; padding-left: 2px; border-left: 1px solid #d9d9d9; }
.search { width: 406px; height: 44px; margin-left: 12px; border: 1px solid #d9d9d9; display: flex; align-items: center; padding: 0 11px 0 13px; }
.search input { flex: 1; min-width: 0; outline: 0; font-size: 23px; }
.search input::placeholder { color: #6d6d6d; opacity: 1; }

/* main area */
.main { flex: 1; min-height: 0; display: flex; overflow: hidden; }
.tree { width: 317px; border-right: 2px solid #f3f3f3; padding: 32px 3px 0 0; font-size: 23px; }
.tree a { height: 48px; display: flex; align-items: center; gap: 5px; padding: 2px 0 0 48px; white-space: nowrap; }
.tree .sub { padding-left: 64px; }
.tree .gap { margin-top: 16px; }
.tree .kana { font-size: 20px; }
.tree .current { background: #d9d9d9; }
.files { width: 1430px; padding-left: 31px; overflow: hidden; }
.grid { display: grid; grid-template-columns: repeat(5, 276px); grid-auto-rows: 330px; gap: 2px 3px; margin-top: -28px; }
.item { position: relative; display: flex; flex-direction: column; align-items: center; justify-content: flex-start; border: 1px solid transparent; padding-top: 19px; font-size: 23px; line-height: 33px; }
.item span { margin-top: 15px; }
.item.selected { background: #cce8ff; border-color: #99d1ff; }
.badge { position: absolute; left: 10px; top: 236px; }
.scrollbar { width: 33px; background: #f0f0f0; display: flex; flex-direction: column; }
.scrollbar button { height: 34px; display: flex; align-items: center; justify-content: center; }
.track { flex: 1; padding-top: 108px; }
.thumb { height: 287px; background: #cdcdcd; }
.previewpane { flex: 1; }

/* status bar */
.status { height: 46px; display: flex; align-items: center; color: #1e395b; padding: 0 16px 0 28px; font-size: 23px; }
.cell { display: flex; align-items: center; border-right: 2px solid #f0f0f0; height: 22px; margin-right: 21px; padding-right: 22px; white-space: nowrap; }
.picked span { margin-left: 15px; }
.cell svg { margin: 0 6px 0 4px; }
.status .bare + .bare { margin-left: 16px; }

/* taskbar */
.taskbar { height: 60px; display: flex; background: radial-gradient(ellipse 180px 120px at 270px 50%, #3c4042, #1f2224); }
.system { display: flex; width: 150px; }
.tb { width: 72px; margin-right: 2px; display: flex; align-items: center; justify-content: center; position: relative; }
.system .tb { width: 70px; }
.run::after { content: ""; position: absolute; left: 8px; right: 8px; bottom: 0; height: 4px; background: #93a7b5; }
.active { background: #3b4145; }
.active::after { left: 0; right: 0; }
.logo { fill: #fff; font-size: 16px; font-weight: 700; text-anchor: middle; }
.ps { fill: #00c0f8; font-size: 15px; }
.tray { display: flex; align-items: center; gap: 18px; color: #fff; }
.tray .bare:nth-child(2) { margin-left: 6px; }
.ime { font-size: 36px; font-weight: 300; line-height: 60px; }
.clock { margin: 0 19px 0 7px; }
.desk { width: 10px; height: 60px; margin-left: 22px; border-left: 2px solid #6b6e70; }
```
